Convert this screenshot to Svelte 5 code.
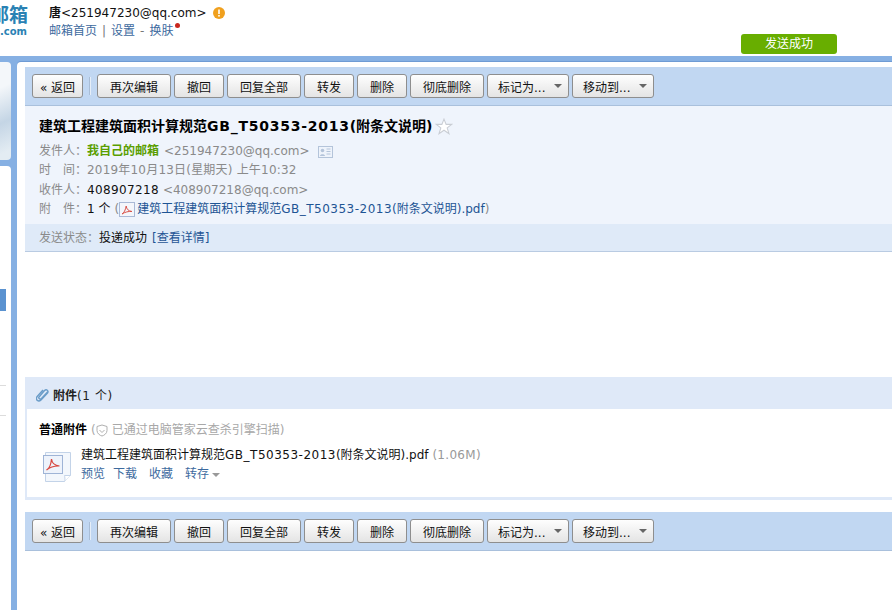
<script>
	const actions = [
		{ label: '再次编辑', w: 74 },
		{ label: '撤回', w: 50 },
		{ label: '回复全部', w: 74 },
		{ label: '转发', w: 50 },
		{ label: '删除', w: 50 },
		{ label: '彻底删除', w: 74 }
	];
	const menus = ['标记为...', '移动到...'];
</script>

{#snippet toolbar()}
	<div class="toolbar">
		<button class="btn back">« 返回</button>
		<span class="sep"></span>
		{#each actions as a}
			<button class="btn" style="width: {a.w}px">{a.label}</button>
		{/each}
		{#each menus as m}
			<button class="btn menu">{m}<i class="caret"></i></button>
		{/each}
	</div>
{/snippet}

{#snippet name()}建筑工程建筑面积计算规范<span class="code">GB_T50353-2013</span>(附条文说明){/snippet}

{#snippet pdfSmall()}
	<svg class="pdf-small" width="16" height="15" viewBox="0 0 16 15">
		<rect x="0.5" y="0.5" width="15" height="14" fill="#f4f6fb" stroke="#a9b9d6" />
		<path d="M3 12c2-1 3.500-4 4.200-8 .3 3 2 5 5.800 5.500-3.500-.3-7 .5-10 2.500z" fill="none" stroke="#d9534a" stroke-width="1" />
	</svg>
{/snippet}

<div class="page">
	<header class="top">
		<div class="logo">
			<span class="logo-cn">邮箱</span>
			<span class="logo-en">.com</span>
		</div>
		<div class="user">
			<div class="user-line">
				<b class="nick">唐</b>&lt;251947230@qq.com&gt;
				<svg class="warn" width="12" height="12" viewBox="0 0 12 12">
					<circle cx="6" cy="6" r="6" fill="#f0a01e" />
					<rect x="5.200" y="2.500" width="1.600" height="4.500" fill="#fff" />
					<rect x="5.200" y="8" width="1.600" height="1.600" fill="#fff" />
				</svg>
			</div>
			<div class="user-links">
				<a href="#home">邮箱首页</a><span class="bar">|</span><a href="#set">设置</a><span class="dash">-</span><a href="#skin">换肤</a><i class="dot"></i>
			</div>
		</div>
		<div class="toast">发送成功</div>
	</header>

	<div class="shell">
		<aside class="side">
			<div class="side-top"></div>
			<div class="side-list">
				<div class="side-sel"></div>
				<div class="side-line first"></div>
				<div class="side-line"></div>
			</div>
		</aside>

		<main class="main">
			{@render toolbar()}

			<section class="head">
				<h1 class="title">
					<span>{@render name()}</span>
					<svg class="star" width="18" height="17" viewBox="0 0 17 16">
						<path d="M8.500 1l2 5h5.300l-4.300 3.300 1.700 5.400-4.700-3.200-4.700 3.200 1.700-5.400L1.200 6h5.300z" fill="#fff" stroke="#c9cdd4" />
					</svg>
				</h1>
				<div class="row">
					<span class="lbl">发件人：</span><b class="me">我自己的邮箱</b>
					<span class="addr">&lt;251947230@qq.com&gt;</span>
					<svg class="card" width="15" height="12" viewBox="0 0 15 12">
						<rect x="0.500" y="0.500" width="14" height="11" fill="#eef3fb" stroke="#b4c4da" />
						<circle cx="4.500" cy="4.500" r="1.800" fill="#b4c4da" />
						<path d="M2 10c0-2.500 5-2.500 5 0z" fill="#b4c4da" />
						<path d="M8.500 3h4M8.500 5.500h4M8.500 8h4" stroke="#b4c4da" />
					</svg>
				</div>
				<div class="row"><span class="lbl">时　间：</span><span class="addr when">2019年10月13日(星期天) 上午10:32</span></div>
				<div class="row"><span class="lbl">收件人：</span><span class="dark num">408907218</span> <span class="addr">&lt;408907218@qq.com&gt;</span></div>
				<div class="row">
					<span class="lbl">附　件：</span><span class="dark">1 个</span> <span class="addr">(</span>{@render pdfSmall()}<a class="file" href="#file">{@render name()}.pdf</a><span class="addr">)</span>
				</div>
			</section>
			<div class="status">
				<span class="lbl">发送状态：</span><span class="dark">投递成功</span>
				<a class="file" href="#detail">[查看详情]</a>
			</div>

			<div class="body"></div>

			<section class="attach">
				<div class="attach-head">
					<svg class="clip" width="14" height="15" viewBox="0 0 14 15">
						<path d="M12 4.500L5.500 11.500c-1.200 1.200-3 .3-2.700-1.200L8.500 3.500c2-1.800 4.500.3 3 2.500l-6.500 7c-2.800 2.500-6-.5-3.800-3.500L7 3" fill="none" stroke="#6a9cc8" stroke-width="1.400" />
					</svg>
					<b>附件</b><span class="count">(1 个)</span>
				</div>
				<div class="attach-box">
					<div class="attach-kind">
						<b>普通附件</b>
						<span class="scan">(
							<svg class="shield" width="12" height="13" viewBox="0 0 12 13">
								<path d="M6 1l5 1.500v4c0 3-3 5-5 5.500-2-.5-5-2.500-5-5.500v-4z" fill="none" stroke="#b0b0b0" />
								<path d="M3.500 6l2.500 2.500L8.500 6" fill="none" stroke="#b0b0b0" />
							</svg>
							已通过电脑管家云查杀引擎扫描)</span>
					</div>
					<div class="attach-file">
						<svg class="pdf-big" width="30" height="34" viewBox="0 0 30 34">
							<path d="M3.500 1.500h25v23l-6 6h-19z" fill="#f3f7fc" stroke="#c3d3e8" />
							<path d="M22.500 30.500c1-1 0-6 0-6h6" fill="#fff" stroke="#c3d3e8" />
							<rect x="1.500" y="4.500" width="19" height="18" fill="#eef3fb" stroke="#9fb4d6" />
							<path d="M4.500 19c3-1.500 4.500-5.500 5-11 .5 4.500 3 6.500 8 7-5-.2-9.500 1-13 4z" fill="none" stroke="#d8473f" stroke-width="1.200" />
						</svg>
						<div>
							<div class="file-name">{@render name()}.pdf <span class="size">(1.06M)</span></div>
							<div class="file-ops">
								<a href="#p">预览</a><a href="#d">下载</a><a href="#c">收藏</a><a href="#s">转存<i class="caret small"></i></a>
							</div>
						</div>
					</div>
				</div>
			</section>

			{@render toolbar()}
		</main>
	</div>
</div>

<style>
	:global(body) {
		margin: 0;
		background: #fff;
	}
	.page {
		width: 892px;
		height: 610px;
		overflow: hidden;
		display: flex;
		flex-direction: column;
		font-family: 'DejaVu Sans', 'Noto Sans CJK SC', sans-serif;
		font-size: 12px;
		color: #000;
	}
	a {
		color: #1e5494;
		text-decoration: none;
	}
	b {
		font-weight: 700;
	}
	.code {
		letter-spacing: 0.5px;
	}

	.top {
		position: relative;
		height: 56px;
		flex: none;
		display: flex;
	}
	.logo {
		width: 28px;
		overflow: hidden;
		display: flex;
		flex-direction: column;
		align-items: flex-end;
		color: #2a82b4;
		font-weight: 700;
		margin-right: 21px;
	}
	.logo-cn {
		font-size: 19px;
		line-height: 20px;
		margin-top: 5px;
		white-space: nowrap;
		flex: none;
	}
	.logo-en {
		font-size: 10px;
		line-height: 12px;
		margin-top: 1px;
		padding-right: 1px;
	}
	.user {
		padding-top: 5px;
	}
	.user-line {
		line-height: 16px;
		display: flex;
		align-items: center;
		color: #111;
	}
	.nick {
		font-weight: 700;
	}
	.warn {
		margin-left: 6px;
	}
	.user-links {
		margin-top: 2px;
		line-height: 16px;
		display: flex;
		align-items: flex-start;
		color: #777;
	}
	.user-links a {
		color: #3d6a9e;
	}
	.bar {
		margin: 0 5px;
	}
	.dash {
		margin: 0 5px;
	}
	.dot {
		width: 5px;
		height: 5px;
		border-radius: 50%;
		background: #c9281e;
		margin: 0 0 0 2px;
	}
	.toast {
		position: absolute;
		left: 741px;
		top: 34px;
		width: 96px;
		height: 20px;
		line-height: 20px;
		text-align: center;
		background: #68ae00;
		color: #fff;
		border-radius: 3px;
	}

	.shell {
		flex: 1;
		display: flex;
		min-height: 0;
		background: #86b0e3;
		padding-top: 6px;
	}
	.side {
		width: 11px;
		flex: none;
		display: flex;
		flex-direction: column;
		gap: 6px;
		margin-right: 6px;
	}
	.side-top {
		height: 98px;
		flex: none;
		background: linear-gradient(155deg, #f4f7fa 25%, #c4d5e5 60%, #e3ecf3 90%);
		border-radius: 0 4px 4px 0;
	}
	.side-list {
		flex: 1;
		background: #fff;
		border-radius: 0 4px 0 0;
		padding-top: 123px;
	}
	.side-sel {
		width: 6px;
		height: 22px;
		background: #5a92d0;
	}
	.side-line {
		width: 6px;
		height: 1px;
		background: #dcdcdc;
		margin-top: 29px;
	}
	.side-line.first {
		margin-top: 74px;
	}

	.main {
		flex: 1;
		min-width: 0;
		background: #fff;
		border-radius: 4px 0 0 0;
		box-shadow: 0 -1px 0 #6f9bd4;
		padding: 5px 0 0 8px;
		display: flex;
		flex-direction: column;
	}
	.toolbar {
		height: 39px;
		flex: none;
		box-sizing: border-box;
		background: #c1d7f2;
		border-bottom: 1px solid #a9c0dc;
		padding: 7px 0 0 7px;
		display: flex;
		align-items: flex-start;
		gap: 3px;
	}
	.btn {
		height: 24px;
		box-sizing: border-box;
		padding: 0;
		border: 1px solid #8e8e8e;
		border-radius: 3px;
		background: linear-gradient(#fefefe, #e4e4e4);
		font: inherit;
		color: #111;
		white-space: nowrap;
	}
	.back {
		width: 51px;
	}
	.sep {
		width: 1px;
		height: 18px;
		margin: 3px 3px 0 3px;
		background: #e6eef8;
		border-left: 1px solid #a9bdd6;
	}
	.menu {
		width: 82px;
		text-align: left;
		padding-left: 10px;
		display: flex;
		align-items: center;
		justify-content: space-between;
		padding-right: 6px;
	}
	.caret {
		display: inline-block;
		width: 0;
		height: 0;
		border: 4px solid transparent;
		border-top: 4px solid #666;
		border-bottom: 0;
	}
	.caret.small {
		border-top-color: #999;
		margin-left: 3px;
		vertical-align: 1px;
	}

	.head {
		background: #eff4fc;
		height: 118px;
		flex: none;
		box-sizing: border-box;
		padding: 11px 14px 0;
	}
	.title {
		margin: 0 0 7px;
		font-size: 14px;
		line-height: 18px;
		font-weight: 700;
		display: flex;
		align-items: center;
		white-space: nowrap;
	}
	.title .code {
		letter-spacing: 0.75px;
	}
	.star {
		margin-left: 2px;
	}
	.row {
		height: 19.300px;
		line-height: 19px;
		color: #8a8a8a;
		white-space: nowrap;
		display: flex;
		align-items: center;
	}
	.lbl {
		color: #8a8a8a;
		width: 48px;
		flex: none;
	}
	.me {
		color: #5a9e00;
		margin-right: 5px;
	}
	.addr {
		color: #8a8a8a;
	}
	.when {
		letter-spacing: 0.2px;
	}
	.dark {
		color: #111;
	}
	.row .dark {
		margin-right: 4px;
	}
	.num {
		letter-spacing: 0.35px;
	}
	.card {
		margin-left: 8px;
	}
	.pdf-small {
		margin: 0 2px 0 0;
	}
	.status {
		height: 28px;
		flex: none;
		box-sizing: border-box;
		background: #dfeaf8;
		border-bottom: 1px solid #b9cbe2;
		padding-left: 14px;
		line-height: 29px;
		white-space: nowrap;
		display: flex;
	}
	.status .lbl {
		width: 60px;
	}
	.status .file {
		margin-left: 5px;
	}
	.body {
		height: 125px;
		flex: none;
	}

	.attach {
		flex: none;
		height: 123px;
		box-sizing: border-box;
		background: #dfe9f8;
		padding: 0 0 3px 2px;
		margin-bottom: 12px;
		display: flex;
		flex-direction: column;
	}
	.attach-head {
		height: 32px;
		flex: none;
		box-sizing: border-box;
		padding: 3px 0 0 9px;
		display: flex;
		align-items: center;
		color: #222;
	}
	.clip {
		margin-right: 3px;
	}
	.count {
		letter-spacing: 0.6px;
	}
	.attach-box {
		flex: 1;
		background: #fff;
		padding: 13px 0 0 12px;
	}
	.attach-kind {
		line-height: 16px;
		display: flex;
		white-space: nowrap;
	}
	.scan {
		color: #a8a8a8;
		margin-left: 4px;
		display: flex;
		align-items: center;
		gap: 2px;
	}
	.shield {
		margin: 0 2px 0 -2px;
	}
	.attach-file {
		margin: 9px 0 0 3px;
		display: flex;
		gap: 9px;
		white-space: nowrap;
	}
	.pdf-big {
		flex: none;
		margin-top: 4px;
	}
	.file-name {
		line-height: 16px;
		color: #111;
	}
	.size {
		color: #999;
		letter-spacing: 0.3px;
	}
	.file-ops {
		line-height: 16px;
		margin-top: 3px;
		display: flex;
		gap: 12px;
	}
	.file-ops a {
		color: #3d6a9e;
	}
	.file-ops a:first-child {
		margin-right: -4px;
	}
</style>
